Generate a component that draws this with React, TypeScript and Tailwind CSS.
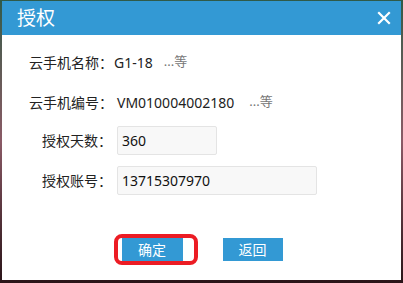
import React from "react";

const font = { fontFamily: '"Noto Sans", "Noto Sans CJK SC", sans-serif' };

export default function App() {
  return (
    <div
      className="w-[403px] h-[283px] overflow-hidden bg-gradient-to-b from-[#2f5a48] via-[#8a5a66] to-[#2a1418] pt-[1px] pl-[2px]"
      style={font}
    >
      <div className="w-[399px] h-[279px] bg-white flex flex-col">
        <div className="h-[34px] bg-[#3399d4] flex items-center justify-between pl-[15px] pr-[9px]">
          <span className="text-white text-[19px] leading-none">授权</span>
          <svg width="14" height="14" viewBox="0 0 14 14" className="mr-[1px]">
            <path d="M2 2 L12 12 M12 2 L2 12" stroke="white" strokeWidth="2.2" strokeLinecap="square" />
          </svg>
        </div>
        <div className="flex flex-col pl-[27px] text-[14px] text-[#222]">
          <div className="flex items-center h-[20px] mt-[17px]">
            <span className="w-[85px]">云手机名称：</span>
            <span>G1-18</span>
            <span className="ml-[11px] text-[13px] text-[#777]">...等</span>
          </div>
          <div className="flex items-center h-[20px] mt-[20px]">
            <span className="w-[88px]">云手机编号：</span>
            <span>VM010004002180</span>
            <span className="ml-[15px] text-[13px] text-[#777]">...等</span>
          </div>
          <div className="flex items-center mt-[14px]">
            <span className="w-[88px] text-right pr-[5px]">授权天数：</span>
            <div className="w-[100px] h-[29px] bg-[#f8f8f8] border border-[#e4e4e4] rounded-[2px] flex items-center pl-[4px] text-[#111]">
              360
            </div>
          </div>
          <div className="flex items-center mt-[11px]">
            <span className="w-[88px] text-right pr-[5px]">授权账号：</span>
            <div className="w-[200px] h-[29px] bg-[#f8f8f8] border border-[#e4e4e4] rounded-[2px] flex items-center pl-[4px] text-[#111]">
              13715307970
            </div>
          </div>
        </div>
        <div className="flex justify-center items-center gap-[40px] mt-[43px] pl-[1px]">
          <div className="relative">
            <div className="w-[61px] h-[23px] bg-[#3399d4] text-white text-[14px] flex items-center justify-center">
              确定
            </div>
            <div className="absolute left-[-8px] top-[-4px] w-[84px] h-[31px] border-[4px] border-[#ec1c24] rounded-[8px]" />
          </div>
          <div className="w-[60px] h-[23px] bg-[#3399d4] text-white text-[14px] flex items-center justify-center">
            返回
          </div>
        </div>
      </div>
    </div>
  );
}
